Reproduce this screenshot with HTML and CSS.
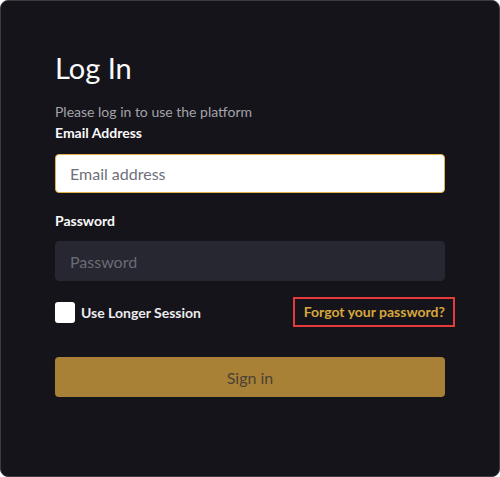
FILE: index.html
```html
<!DOCTYPE html>
<html lang="en">
<head>
<meta charset="utf-8">
<title>Log In</title>
<link rel="stylesheet" href="styles.css">
</head>
<body>
<div class="card">
  <h1 class="title">Log In</h1>
  <p class="subtitle">Please log in to use the platform</p>
  <label class="label label-email" for="email">Email Address</label>
  <input class="input input-email" id="email" type="text" placeholder="Email address">
  <label class="label label-password" for="password">Password</label>
  <input class="input input-password" id="password" type="password" placeholder="Password">
  <div class="row">
    <label class="check">
      <span class="box"></span>
      <span class="check-text">Use Longer Session</span>
    </label>
    <a class="forgot" href="#">Forgot your password?</a>
  </div>
  <button class="signin" type="button">Sign in</button>
</div>
</body>
</html>
```

FILE: styles.css
```css
* { box-sizing: border-box; }
html, body { margin: 0; padding: 0; background: #ffffff; }
body { font-family: "Lato", "Noto Sans", sans-serif; }

.card {
  width: 500px;
  height: 477px;
  background: #15141a;
  border: 1px solid #3b3b42;
  border-radius: 8px;
  padding: 49px 54px 0 54px;
  display: flex;
  flex-direction: column;
}

.title {
  margin: 0;
  font-size: 29px;
  line-height: 36px;
  font-weight: 400;
  color: #fafafa;
}

.subtitle {
  margin: 16px 0 0 0;
  font-size: 14px;
  line-height: 20px;
  color: #a3a3ab;
}

.label {
  display: block;
  font-size: 14px;
  line-height: 20px;
  font-weight: 700;
  color: #fafafa;
}
.label-email { margin-top: 1px; }
.label-password { margin-top: 18px; }

.input {
  display: block;
  width: 100%;
  height: 39px;
  border-radius: 4px;
  padding: 0 14px;
  font-family: inherit;
  font-size: 16px;
  outline: none;
}
.input-email {
  margin-top: 11px;
  background: #ffffff;
  border: 1px solid #e2b24a;
  color: #31333f;
}
.input-email::placeholder { color: #6d707b; }
.input-password {
  margin-top: 10px;
  height: 40px;
  background: #262730;
  border: 1px solid #262730;
  color: #fafafa;
}
.input-password::placeholder { color: #6a6c76; }

.row {
  margin-top: 16px;
  height: 30px;
  display: flex;
  align-items: center;
  justify-content: space-between;
}

.check {
  display: flex;
  align-items: center;
  gap: 6px;
}
.box {
  width: 20px;
  height: 21px;
  background: #ffffff;
  border-radius: 3px;
}
.check-text {
  font-size: 14px;
  font-weight: 700;
  color: #ececef;
}

.forgot {
  position: relative;
  font-size: 14px;
  font-weight: 700;
  line-height: 20px;
  color: #d6a73d;
  text-decoration: none;
}
.forgot::after {
  content: "";
  position: absolute;
  top: -5px;
  bottom: -5px;
  left: -11px;
  right: -10px;
  border: 2px solid #e53a3a;
}

.signin {
  margin-top: 30px;
  width: 100%;
  height: 40px;
  border: none;
  border-radius: 4px;
  background: #a88137;
  color: #4b4233;
  font-family: inherit;
  font-size: 16px;
}
```
